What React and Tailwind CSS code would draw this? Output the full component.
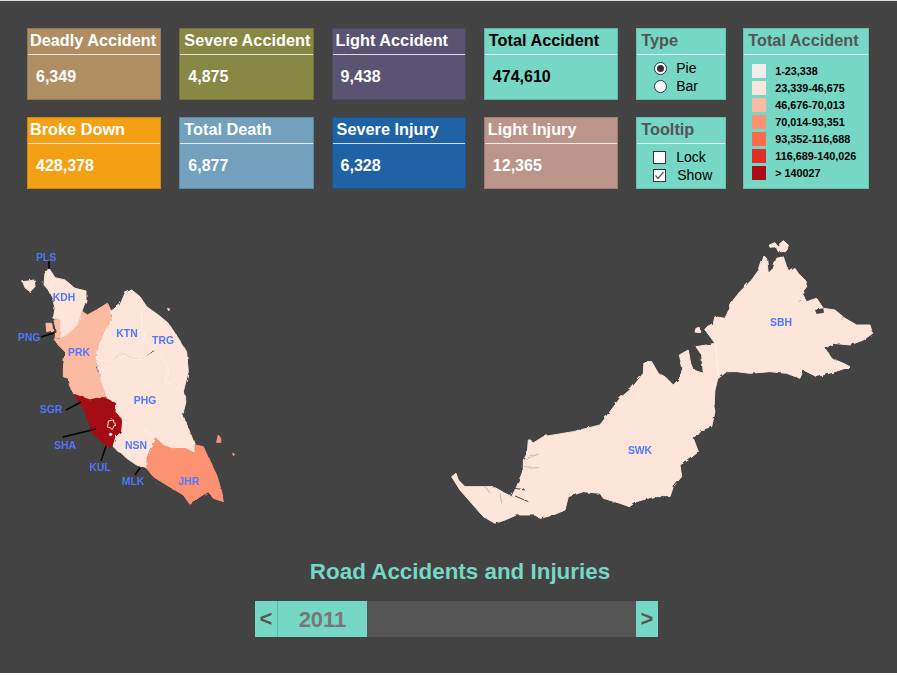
import React from 'react'

const font = { fontFamily: '"Liberation Sans", Arial, sans-serif' }

const statsTop = [
    { title: 'Deadly Accident', value: '6,349', bg: 'bg-[#af8e63]', pad: 'pl-[2px]' },
    { title: 'Severe Accident', value: '4,875', bg: 'bg-[#878843]', pad: 'pl-[4px]' },
    { title: 'Light Accident', value: '9,438', bg: 'bg-[#5a5472]', pad: 'pl-[3px]' },
    { title: 'Total Accident', value: '474,610', bg: 'bg-[#76d7c4]', pad: 'pl-[4px]', dark: true },
]
const statsBottom = [
    { title: 'Broke Down', value: '428,378', bg: 'bg-[#f4a014]', pad: 'pl-[2px]' },
    { title: 'Total Death', value: '6,877', bg: 'bg-[#73a0bd]', pad: 'pl-[4px]' },
    { title: 'Severe Injury', value: '6,328', bg: 'bg-[#1f62a5]', pad: 'pl-[4px]' },
    { title: 'Light Injury', value: '12,365', bg: 'bg-[#bc958a]', pad: 'pl-[3px]' },
]
const legend = [
    ['bg-[#eeeeee]', '1-23,338'],
    ['bg-[#fee5d9]', '23,339-46,675'],
    ['bg-[#fcbba1]', '46,676-70,013'],
    ['bg-[#fc9272]', '70,014-93,351'],
    ['bg-[#fb6a4a]', '93,352-116,688'],
    ['bg-[#de2d26]', '116,689-140,026'],
    ['bg-[#a50f15]', '> 140027'],
]

const StatCard = ({ title, value, bg, pad, dark }) => (
    <div className={`w-[134.4px] h-[72px] ${bg} ${dark ? 'text-black' : 'text-white'} border border-black/15`}>
        <div className={`h-[26px] ${pad} border-b border-white/80 text-[16.3px] font-bold leading-[22px] whitespace-nowrap`}>{title}</div>
        <div className="pl-[8px] pt-[12px] text-[16px] font-bold leading-[20px]">{value}</div>
    </div>
)

const Panel = ({ title, className, children }) => (
    <div className={`bg-[#76d7c4] border border-black/10 ${className}`}>
        <div className="h-[26px] pl-[4px] border-b border-white/80 text-[16.3px] font-bold leading-[22px] text-[#555555] whitespace-nowrap">{title}</div>
        {children}
    </div>
)

// traced in 3x coordinates of the crop, hence the scale on the groups
const peninsula = [
    { fill: '#fee5d9', d: 'M147 100L160 120L165 128L195 135L225 160L258 168L258 195L248 222L232 270L205 295L182 312L178 290L180 255L160 250L165 220L158 190L145 165L132 150L135 115Z' },
    { fill: '#fee5d9', d: 'M68 140L85 138L103 135L105 155L90 170L75 158Z' },
    { fill: '#fcbba1', d: 'M162 255L180 255L178 290L182 308L165 310L168 285Z' },
    { fill: '#fcbba1', d: 'M138 265L155 265L158 285L140 290Z' },
    { fill: '#fcbba1', d: 'M162 312L182 312L205 295L232 270L245 228L262 240L290 225L322 205L335 230L330 270L320 282L300 325L290 375L290 400L305 440L318 490L290 490L270 495L250 485L222 478L208 450L205 430L190 425L190 400L195 350L175 330Z' },
    { fill: '#fee5d9', d: 'M330 230L360 210L375 175L395 165L420 185L440 215L425 230L425 270L440 320L460 345L430 370L400 372L370 355L335 375L310 380L290 375L300 325L320 282L330 270L338 240Z' },
    { fill: '#fee5d9', d: 'M440 215L475 240L505 265L535 310L560 350L565 410L555 450L550 470L530 450L495 440L505 400L485 365L460 345L440 320L425 270L425 230Z' },
    { fill: '#fee5d9', d: 'M290 378L335 378L370 358L400 375L430 372L462 350L485 365L505 400L495 440L530 452L550 470L558 500L548 540L565 580L585 630L585 655L555 640L515 640L485 625L465 605L440 590L400 570L365 550L345 530L347 505L322 490L305 440Z' },
    { fill: '#fee5d9', d: 'M365 553L400 572L440 590L465 605L445 650L440 665L400 655L380 655L355 650L340 635L345 605L362 590Z' },
    { fill: '#fee5d9', d: 'M345 635L380 655L440 665L440 700L410 690L380 670Z' },
    { fill: '#a50f15', d: 'M222 478L250 488L270 495L290 490L320 492L347 505L345 530L365 555L362 590L345 605L340 620L330 638L315 630L295 610L272 590L270 570L255 530Z' },
    { fill: '#fc9272', d: 'M465 610L490 630L515 642L555 640L585 655L585 630L610 635L630 680L650 720L665 770L670 800L640 790L625 770L600 785L570 808L550 780L500 750L460 725L440 700L442 665Z' },
    { fill: '#fc9272', d: 'M655 600L662 610L663 622L650 622Z' },
    { fill: '#fc9272', d: 'M698 655L704 658L700 662Z' },
    { fill: '#fee5d9', d: 'M503 220L509 222L506 228Z' },
]

const borders = [
    'M147 160L165 130',
    'M182 312L205 295L232 270L245 225',
    'M330 230L338 240L330 270L320 282L300 325L290 375L335 378L370 358L400 375L430 372L462 350L485 365L505 400L495 440L530 452L550 470',
    'M440 215L425 230L425 270L440 320L460 345',
    'M365 553L400 572L440 590L465 605L445 650L440 665L400 655L380 655L355 650',
]

const borneo = [
    'M35 740L48 730L55 750L75 770L130 770L160 770L195 790L215 800L230 770L250 720L250 690L262 670L265 630L272 630L278 640L310 620L400 605L480 585L510 545L540 505L575 475L610 430L612 395L635 395L655 430L675 440L700 465L720 445L728 415L718 375L745 360L752 400L760 420L790 430L785 375L768 350L800 345L825 340L830 380L835 440L825 480L822 530L825 545L815 590L780 600L760 625L775 665L745 690L720 705L725 740L700 770L690 800L640 800L590 815L568 830L540 820L490 805L480 790L430 785L385 800L375 840L340 855L300 865L285 855L230 855L195 870L165 880L130 860L95 820L60 780Z',
    'M825 340L792 295L820 280L825 260L855 265L880 210L900 185L935 150L960 115L972 78L980 85L985 130L1000 115L1010 85L1030 80L1040 110L1050 125L1065 115L1075 130L1095 150L1100 170L1085 190L1100 215L1130 205L1150 235L1185 240L1215 265L1250 285L1290 285L1298 310L1270 330L1230 345L1180 340L1155 355L1175 385L1210 400L1230 410L1185 425L1130 440L1090 420L1080 445L1040 430L990 425L930 430L890 425L860 425L835 445L830 380Z',
    'M988 45L1005 38L1012 48L1030 32L1045 45L1040 65L1015 65L1008 50L990 52Z',
    'M768 295L778 292L780 308L765 306Z',
]

const labels = [
    ['PLS', 46, 261], ['KDH', 64, 301], ['PNG', 29, 341], ['PRK', 79, 356], ['KTN', 127, 337], ['TRG', 163, 344],
    ['PHG', 145, 404], ['SGR', 51, 413], ['SHA', 65, 449], ['NSN', 136, 449], ['KUL', 100, 471], ['MLK', 133, 485],
    ['JHR', 189, 485], ['SBH', 781, 326], ['SWK', 640, 454],
]

const leaders = [
    [49, 261, 49, 269], [41, 337, 54, 333], [66, 410, 81, 402], [63, 437, 96, 429], [101, 461, 106, 446], [135, 475, 140, 468],
]

const MapView = () => (
    <svg width="897" height="320" viewBox="0 220 897 320" className="block mt-[31px]">
        <defs>
            <filter id="coast" x="-5%" y="-5%" width="110%" height="110%">
                <feTurbulence type="fractalNoise" baseFrequency="0.14" numOctaves="2" seed="4" result="n" />
                <feDisplacementMap in="SourceGraphic" in2="n" scale="3" />
            </filter>
        </defs>
        <g filter="url(#coast)">
            <g transform="translate(0 235) scale(0.3333)" strokeLinejoin="round">
                {peninsula.map((p, i) => <path key={i} d={p.d} fill={p.fill} stroke={p.fill} strokeWidth="3" />)}
                {borders.map((d, i) => <path key={i} d={d} fill="none" stroke="#ffffff" strokeWidth="2" opacity="0.8" />)}
                <path d="M325 558L340 555L344 570L337 583L323 577Z" fill="#a50f15" stroke="#fee5d9" strokeWidth="3" />
                <circle cx="332" cy="598" r="5" fill="#fee5d9" />
            </g>
            <g transform="translate(440 230) scale(0.3333)" strokeLinejoin="round">
                {borneo.map((d, i) => <path key={i} d={d} fill="#fee5d9" stroke="#fee5d9" strokeWidth="3" />)}
                <path d="M825 340L830 380L835 440" fill="none" stroke="#ffffff" strokeWidth="2" />
                <path d="M1125 240L1150 235L1152 248L1130 252Z" fill="#434343" />
                <path d="M225 775L255 780M225 798L265 815" fill="none" stroke="#434343" strokeWidth="3" />
                <path d="M250 690L295 672M248 712L295 710M135 770L150 790M180 790L185 820M1075 215L1095 205M1205 270L1210 258" fill="none" stroke="#8a7f7a" strokeWidth="1.5" />
            </g>
        </g>
        {leaders.map((l, i) => <line key={i} x1={l[0]} y1={l[1]} x2={l[2]} y2={l[3]} stroke="#000000" strokeWidth="1.5" />)}
        {labels.map(([t, x, y]) => (
            <text key={t} x={x} y={y} textAnchor="middle" fontSize="10.4" fontWeight="700" fill="#4d78ff" fontFamily="Liberation Sans">{t}</text>
        ))}
    </svg>
)

export default function App() {
    return (
        <div className="w-[897px] h-[673px] bg-[#434343] border-t border-[#dddddd] overflow-hidden" style={font}>
            <div className="flex pl-[27px] pt-[27px]">
                <div className="flex flex-col gap-[17px]">
                    <div className="flex gap-[17.9px]">
                        {statsTop.map((s) => <StatCard key={s.title} {...s} />)}
                    </div>
                    <div className="flex gap-[17.9px]">
                        {statsBottom.map((s) => <StatCard key={s.title} {...s} />)}
                    </div>
                </div>
                <div className="ml-[18px] flex flex-col gap-[17px]">
                    <Panel title="Type" className="w-[89.5px] h-[72px]">
                        <div className="pl-[17px] pt-[4px] text-[14px] leading-[18px] text-black">
                            <label className="flex items-center gap-[9px]">
                                <span className="w-[13px] h-[13px] rounded-full bg-white border border-[#333333] flex items-center justify-center">
                                    <span className="w-[7px] h-[7px] rounded-full bg-[#333333]" />
                                </span>
                                Pie
                            </label>
                            <label className="flex items-center gap-[9px]">
                                <span className="w-[13px] h-[13px] rounded-full bg-white border border-[#333333]" />
                                Bar
                            </label>
                        </div>
                    </Panel>
                    <Panel title="Tooltip" className="w-[89.5px] h-[72px]">
                        <div className="pl-[16px] pt-[4px] text-[14px] leading-[18px] text-black">
                            <label className="flex items-center gap-[10px]">
                                <span className="w-[13px] h-[13px] bg-white border border-[#333333]" />
                                Lock
                            </label>
                            <label className="flex items-center gap-[11px]">
                                <span className="w-[13px] h-[13px] bg-white border border-[#333333] flex items-center justify-center">
                                    <svg width="11" height="11" viewBox="0 0 11 11"><path d="M1.5 5.5L4 8.5L9.5 2" fill="none" stroke="#555555" strokeWidth="1.2" /></svg>
                                </span>
                                Show
                            </label>
                        </div>
                    </Panel>
                </div>
                <div className="ml-[17.5px]">
                    <Panel title="Total Accident" className="w-[125.5px] h-[161px]">
                        <div className="pl-[8px] pt-[9px] flex flex-col gap-[3px]">
                            {legend.map(([c, t]) => (
                                <div key={t} className="flex items-center h-[14px] text-[10.8px] font-bold text-black whitespace-nowrap">
                                    <span className={`w-[14px] h-[14px] ${c}`} />
                                    <span className="ml-[9px]">{t}</span>
                                </div>
                            ))}
                        </div>
                    </Panel>
                </div>
            </div>
            <MapView />
            <h1 className="text-center text-[22.4px] font-bold leading-[26px] text-[#76d7c4] mt-[19px] pl-[23px]">Road Accidents and Injuries</h1>
            <div className="mt-[16px] ml-[255px] w-[403px] h-[36px] flex bg-[#555555]">
                <div className="w-[23px] bg-[#76d7c4] border-r border-black/15 text-[22px] font-bold leading-[36px] text-center text-[#555555]">&lt;</div>
                <div className="w-[89px] bg-[#76d7c4] text-[22px] font-bold leading-[38px] text-center text-[#777777]">2011</div>
                <div className="flex-1" />
                <div className="w-[22px] bg-[#76d7c4] text-[22px] font-bold leading-[36px] text-center text-[#555555]">&gt;</div>
            </div>
        </div>
    )
}
